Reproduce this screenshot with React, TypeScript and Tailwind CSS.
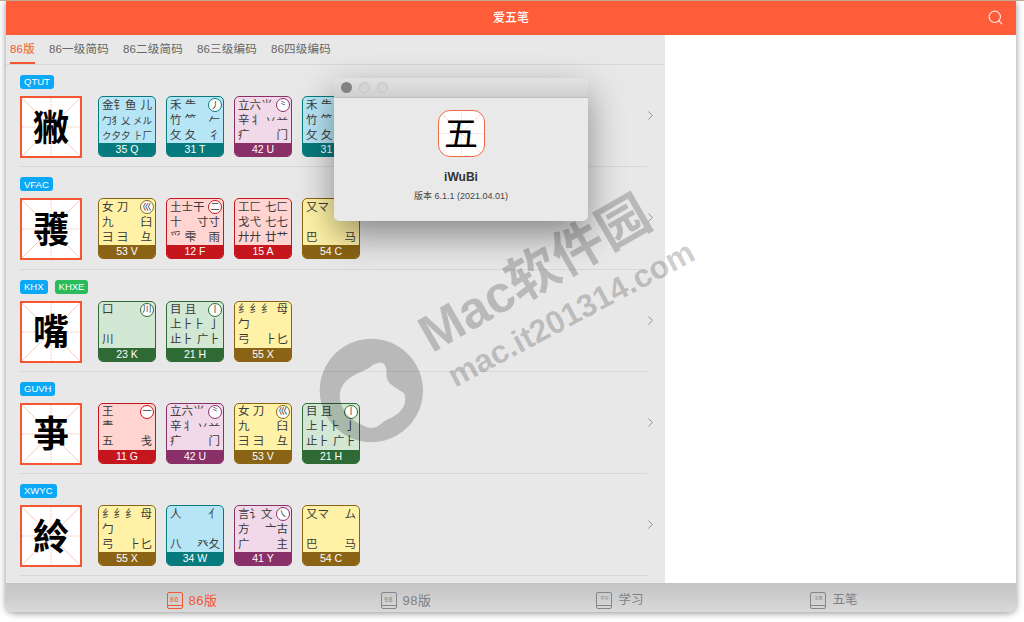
import React from "react";
import { ChevronRight, Search } from "lucide-react";

type Color = "teal" | "purple" | "yellow" | "red" | "green";

const palette: Record<Color, { body: string; foot: string }> = {
  teal: { body: "bg-[#b6e5f5] border-[#067a7c]", foot: "bg-[#067a7c]" },
  purple: { body: "bg-[#f1d9ea] border-[#8a3069]", foot: "bg-[#8a3069]" },
  yellow: { body: "bg-[#fff2a6] border-[#8a6414]", foot: "bg-[#8a6414]" },
  red: { body: "bg-[#ffd4d1] border-[#c5161d]", foot: "bg-[#c5161d]" },
  green: { body: "bg-[#d3e8d4] border-[#2f6a35]", foot: "bg-[#2f6a35]" },
};

type KeyDef = {
  label: string;
  color: Color;
  stroke?: string;
  lines: [string, string][];
};

const keys: Record<string, KeyDef> = {
  Q: { label: "35 Q", color: "teal", lines: [["金钅鱼", "儿"], ["勹犭乂", "㐅ル"], ["ク夕夕", "⺊厂"]] },
  T: { label: "31 T", color: "teal", stroke: "丿", lines: [["禾 ⺧", ""], ["竹 ⺮", "𠂉"], ["攵 夂", "彳"]] },
  U: { label: "42 U", color: "purple", stroke: "⺀", lines: [["立六⺌", ""], ["辛丬", "丷䒑"], ["疒", "门"]] },
  V: { label: "53 V", color: "yellow", stroke: "巛", lines: [["女 刀", ""], ["九", "臼"], ["彐 ⺕", "⺔"]] },
  F: { label: "12 F", color: "red", stroke: "二", lines: [["土士干", ""], ["十", "寸寸"], ["⺤ 雫", "雨"]] },
  A: { label: "15 A", color: "red", lines: [["工匚", "七匚"], ["戈弋", "七七"], ["廾廾", "廿艹"]] },
  C: { label: "54 C", color: "yellow", lines: [["又マ", "ム"], ["", ""], ["巴", "马"]] },
  K: { label: "23 K", color: "green", stroke: "川", lines: [["口", ""], ["", ""], ["川", ""]] },
  H: { label: "21 H", color: "green", stroke: "丨", lines: [["目 且", ""], ["上⺊⺊", "亅"], ["止⺊", "广⺊"]] },
  X: { label: "55 X", color: "yellow", lines: [["纟纟纟", "母"], ["勹", ""], ["弓", "⺊匕"]] },
  G: { label: "11 G", color: "red", stroke: "一", lines: [["王", ""], ["龶", ""], ["五", "戋"]] },
  W: { label: "34 W", color: "teal", lines: [["人", "亻"], ["", ""], ["八", "癶夂"]] },
  Y: { label: "41 Y", color: "purple", stroke: "㇏", lines: [["言讠文", ""], ["方", "亠古"], ["广", "主"]] },
};

const rows = [
  { tags: ["QTUT"], char: "獙", codes: ["Q", "T", "U", "T"] },
  { tags: ["VFAC"], char: "彟", codes: ["V", "F", "A", "C"] },
  { tags: ["KHX", "KHXE"], char: "嘴", codes: ["K", "H", "X"] },
  { tags: ["GUVH"], char: "亊", codes: ["G", "U", "V", "H"] },
  { tags: ["XWYC"], char: "紷", codes: ["X", "W", "Y", "C"] },
];

const tabs = ["86版", "86一级简码", "86二级简码", "86三级编码", "86四级编码"];

const GridLines = () => (
  <svg className="absolute inset-0 h-full w-full" viewBox="0 0 58 58" fill="none" stroke="#f3b7a6" strokeWidth="0.7">
    <path d="M0 0L58 58M58 0L0 58" />
    <path d="M29 0V58M0 29H58" strokeDasharray="2 1" />
  </svg>
);

const KeyCap = ({ def }: { def: KeyDef }) => {
  const c = palette[def.color];
  return (
    <div className={`relative flex h-[61px] w-[58px] flex-col overflow-hidden rounded-[5px] border-[1.5px] ${c.body}`}>
      <div className="flex flex-1 flex-col justify-center px-[3px] text-[#3a3a3a]">
        {def.lines.map(([l, r], i) => {
          const n = Array.from(l + r).filter((x) => x !== " ").length;
          return (
            <div
              key={i}
              className={`flex h-[15px] items-center justify-between whitespace-nowrap leading-[15px] ${n > 4 ? "text-[9.5px]" : "text-[11.5px]"}`}
            >
              <span>{l}</span>
              <span>{r}</span>
            </div>
          );
        })}
      </div>
      <div className={`h-[13px] text-center text-[10.5px] leading-[13px] text-white ${c.foot}`}>{def.label}</div>
      {def.stroke && (
        <div
          className={`absolute right-[1px] top-[1px] flex h-[14px] w-[14px] items-center justify-center rounded-full border bg-white text-[9px] leading-none text-[#333] ${c.body}`}
        >
          {def.stroke}
        </div>
      )}
    </div>
  );
};

const Row = ({ row }: { row: (typeof rows)[number] }) => (
  <div className="ml-[14px] mr-[18px] flex h-[102.3px] items-center border-b border-[#d8d8dc]">
    <div className="flex-1 self-start pt-[10px]">
      <div className="flex gap-[7px]">
        {row.tags.map((t) => (
          <span
            key={t}
            className={`flex h-[14px] items-center rounded-[3px] px-[4px] text-[9.5px] leading-none text-white ${t === "KHXE" ? "bg-[#2cbb5a]" : "bg-[#0aa8f5]"}`}
          >
            {t}
          </span>
        ))}
      </div>
      <div className="mt-[7px] flex items-start">
        <div className="relative flex h-[62px] w-[62px] items-center justify-center border-2 border-[#f4572f] bg-white pt-[3px]">
          <GridLines />
          <span className="relative text-[36px] font-bold leading-none text-black">{row.char}</span>
        </div>
        <div className="ml-[16px] flex gap-[10px]">
          {row.codes.map((k, i) => (
            <KeyCap key={i} def={keys[k]} />
          ))}
        </div>
      </div>
    </div>
    <ChevronRight className="-mr-[11px] h-[15px] w-[15px] text-[#8e8e8e]" strokeWidth={1.5} />
  </div>
);

const BookIcon = ({ text, small, active }: { text: string; small?: boolean; active?: boolean }) => (
  <div
    className={`flex h-[17px] w-[16px] flex-col rounded-[2px] border ${active ? "border-[#f4572f] text-[#f4572f]" : "border-[#85858a] text-[#85858a]"}`}
  >
    <div className={`flex flex-1 items-center justify-center leading-none ${small ? "text-[4px]" : "text-[7px]"}`}>{text}</div>
    <div className={`h-[3px] border-t ${active ? "border-[#f4572f]" : "border-[#85858a]"}`} />
  </div>
);

export default function App() {
  return (
    <div className="relative h-[622px] w-[1024px] overflow-hidden border-t border-[#c4a78f] bg-white font-['Liberation_Sans','Noto_Sans_CJK_SC',sans-serif]">
      <div className="ml-[6px] flex h-[611px] w-[1010px] flex-col overflow-hidden rounded-b-[8px] shadow-[0_1px_7px_rgba(0,0,0,0.45)]">
        {/* 顶部标题栏 */}
        <div className="relative flex h-[34px] items-center justify-center bg-[#ff5c3a] text-[12px] font-medium text-white">
          爱五笔
          <Search className="absolute right-[12px] top-[8px] h-[17px] w-[17px] text-white/85" strokeWidth={1.6} />
        </div>

        <div className="flex flex-1 overflow-hidden">
          {/* 字根列表 */}
          <div className="w-[659px] bg-[#e8e8e8]">
            <div className="flex h-[30px] items-end gap-[14px] border-b border-[#d8d8d8] pl-[4px]">
              {tabs.map((t, i) => (
                <div
                  key={t}
                  className={`flex h-[29px] items-center border-b-2 pt-[3px] text-[11.5px] tracking-[0.2px] ${i === 0 ? "border-[#f4572f] text-[#f4572f]" : "border-transparent text-[#666]"}`}
                >
                  {t}
                </div>
              ))}
            </div>
            {rows.map((r) => (
              <Row key={r.char} row={r} />
            ))}
          </div>
          <div className="flex-1 bg-white" />
        </div>

        {/* 底部标签栏 */}
        <div className="grid h-[29px] grid-cols-4 bg-gradient-to-b from-[#c3c3c5] to-[#d9d9d9] pl-[79px] pr-[75px] pt-[6px]">
          <div className="flex items-center justify-center gap-[6px] text-[13px] tracking-[0.5px] text-[#f4572f]">
            <BookIcon text="86" active />
            86版
          </div>
          <div className="flex items-center justify-center gap-[6px] text-[13px] tracking-[0.5px] text-[#808085]">
            <BookIcon text="98" />
            98版
          </div>
          <div className="flex items-center justify-center gap-[6px] text-[12.5px] text-[#808085]">
            <BookIcon text="学习" small />
            学习
          </div>
          <div className="flex items-center justify-center gap-[6px] text-[12.5px] text-[#808085]">
            <BookIcon text="五笔" small />
            五笔
          </div>
        </div>
      </div>

      {/* 水印 */}
      <svg className="absolute left-[317px] top-[336px] h-[107px] w-[110px]" viewBox="50 320 330 320">
        <path
          fillRule="evenodd"
          fill="rgba(0,0,0,0.2)"
          d="M213 325a155 155 0 1 0 0.1 0ZM118 490C130 430 190 430 215 405C240 390 262 395 258 430C258 465 290 470 312 490C325 530 290 555 265 565C240 575 235 600 200 590C150 570 118 540 118 490Z"
        />
      </svg>
      <div className="absolute left-[423px] top-[311px] origin-left -rotate-[30deg] whitespace-nowrap text-[52px] font-bold leading-none text-black/20">
        Mac软件园
      </div>
      <div className="absolute left-[450px] top-[361px] origin-left -rotate-[28deg] whitespace-nowrap text-[32px] font-bold leading-none text-black/20">
        mac.it201314.com
      </div>

      {/* 关于窗口 */}
      <div className="absolute left-[334px] top-[77px] h-[143px] w-[254px] overflow-hidden rounded-[5px] bg-[#e9e9e9] shadow-[0_14px_36px_rgba(0,0,0,0.42)]">
        <div className="flex h-[20px] items-center gap-[7px] border-b border-[#bdbdbd] bg-gradient-to-b from-[#e2e2e2] to-[#cfcfcf] pl-[7px]">
          <span className="h-[11px] w-[11px] rounded-full bg-[#818186]" />
          <span className="h-[11px] w-[11px] rounded-full border border-[#c2c2c2] bg-[#d4d4d4]" />
          <span className="h-[11px] w-[11px] rounded-full border border-[#c2c2c2] bg-[#d4d4d4]" />
        </div>
        <div className="flex flex-col items-center">
          <div className="relative mt-[12px] flex h-[47px] w-[47px] items-center justify-center overflow-hidden rounded-[12px] border-[1.5px] border-[#ee6a4a] bg-white">
            <GridLines />
            <span className="relative text-[34px] leading-none text-black">五</span>
          </div>
          <div className="mt-[13px] text-[12px] font-bold leading-[14px] text-[#333]">iWuBi</div>
          <div className="mt-[6px] text-[9px] leading-[12px] text-[#444]">版本 6.1.1 (2021.04.01)</div>
        </div>
      </div>
    </div>
  );
}
